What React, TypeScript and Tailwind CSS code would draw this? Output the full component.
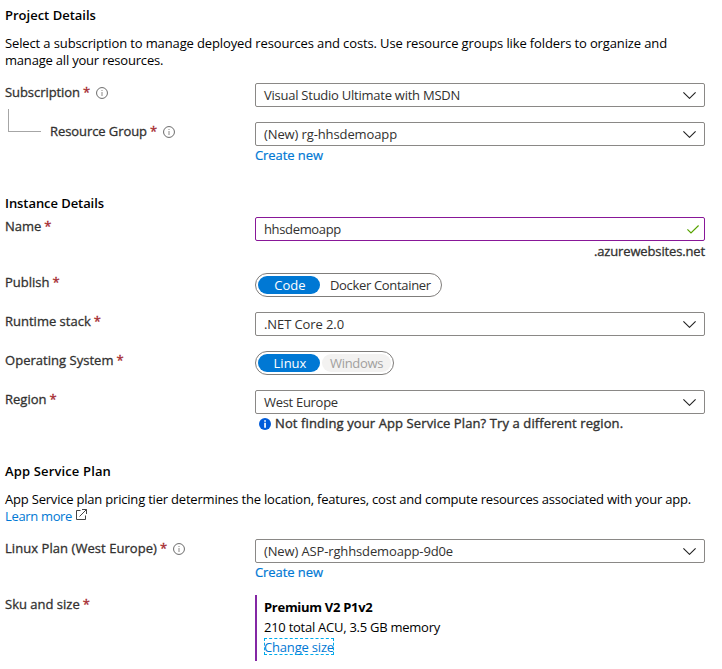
import type { ReactNode } from 'react';

function InfoIcon() {
  return (
    <svg className="ml-1.5 mt-[4px] h-3 w-3 shrink-0" viewBox="0 0 12 12" fill="none">
      <circle cx="6" cy="6" r="5.45" stroke="#6b6b6b" strokeWidth="1" />
      <path d="M6 5v4M6 3v1" stroke="#8a8886" strokeWidth="1" />
    </svg>
  );
}

function Label({ text, className = '', info = false }: { text: string; className?: string; info?: boolean }) {
  return (
    <div className="flex h-[18px] items-start whitespace-nowrap text-[#323130] [-webkit-text-stroke:0.3px]">
      <span className={className}>{text}</span>
      <span className="ml-[3px] text-[#a4262c]">*</span>
      {info && <InfoIcon />}
    </div>
  );
}

function Row({ label, height, children }: { label: ReactNode; height: string; children: ReactNode }) {
  return (
    <div className={`flex ${height}`}>
      <div className="w-[250px] shrink-0">{label}</div>
      <div className="w-[450px] shrink-0">{children}</div>
    </div>
  );
}

function Select({ text, className = '' }: { text: string; className?: string }) {
  return (
    <div className="flex h-6 items-center justify-between rounded-[2px] border border-[#8a8886] pl-2 pr-[8px] text-[#323130]">
      <span className={`whitespace-nowrap ${className}`}>{text}</span>
      <svg className="h-[7px] w-[13px]" viewBox="0 0 13 7" fill="none">
        <path d="M0.4 0.4L6.5 6.3L12.6 0.4" stroke="#222" strokeWidth="1.15" />
      </svg>
    </div>
  );
}

function Toggle({ on, off, offClass, disabled = false }: { on: string; off: string; offClass: string; disabled?: boolean }) {
  return (
    <div className="inline-flex h-6 gap-[2px] rounded-full border border-[#7f7d7b] p-[2px] align-top">
      <span className="w-[62px] rounded-full bg-[#0078d4] pl-0.5 text-center leading-[18px] text-white">
        {on}
      </span>
      <span className={`whitespace-nowrap rounded-full pl-2 leading-[18px] ${disabled ? 'bg-[#f3f2f1] text-[#a19f9d]' : 'text-[#323130]'} ${offClass}`}>
        {off}
      </span>
    </div>
  );
}

export default function App() {
  return (
    <div className="h-[669px] w-[722px] overflow-hidden bg-white pl-[5px] pt-1.5 font-['Open_Sans','Noto_Sans',sans-serif] text-[13px] leading-[18px] text-black">
      <h2 className="h-[29px] font-semibold">Project Details</h2>
      <p className="h-12 whitespace-nowrap leading-[17px]">
        <span className="tracking-[-0.126px]">Select a subscription to manage deployed resources and costs. Use resource groups like folders to organize and</span>
        <br />
        <span className="tracking-[-0.2px]">manage all your resources.</span>
      </p>
      <Row height="h-[39px]" label={
        <div>
          <Label text="Subscription" className="tracking-[-0.06px]" info />
          <div className="ml-[3px] mt-2 h-[23px] w-[33px] border-b border-l border-[#a6a6a6]" />
        </div>
      }>
        <Select text="Visual Studio Ultimate with MSDN" className="tracking-[-0.246px]" />
      </Row>
      <Row height="h-[72px]" label={<div className="pl-[45px]"><Label text="Resource Group" className="tracking-[-0.075px]" info /></div>}>
        <Select text="(New) rg-hhsdemoapp" className="tracking-[-0.113px]" />
        <a className="block tracking-[-0.069px] text-[#0078d4] [-webkit-text-stroke:0.2px]">Create new</a>
      </Row>
      <h2 className="h-[23px] font-semibold tracking-[-0.069px]">Instance Details</h2>
      <Row height="h-14" label={<Label text="Name" />}>
        <div className="flex h-6 items-center justify-between rounded-[2px] border border-[#881798] pl-2 pr-[5px] text-[#323130]">
          <span className="tracking-[-0.35px]">hhsdemoapp</span>
          <svg className="h-[9px] w-3" viewBox="0 0 12 9" fill="none">
            <path d="M0.4 4.3L4 8L11.6 0.5" stroke="#57a300" strokeWidth="1.2" />
          </svg>
        </div>
        <div className="mt-px text-right tracking-[-0.14px] text-[#323130] [-webkit-text-stroke:0.3px]">.azurewebsites.net</div>
      </Row>
      <Row height="h-[39px]" label={<Label text="Publish" />}>
        <Toggle on="Code" off="Docker Container" offClass="w-[117px] tracking-[-0.33px]" />
      </Row>
      <Row height="h-[39px]" label={<Label text="Runtime stack" />}>
        <Select text=".NET Core 2.0" className="tracking-[-0.096px]" />
      </Row>
      <Row height="h-[39px]" label={<Label text="Operating System" className="tracking-[0.03px]" />}>
        <Toggle on="Linux" off="Windows" offClass="w-[69px] tracking-[-0.3px]" disabled />
      </Row>
      <Row height="h-[72px]" label={<Label text="Region" />}>
        <Select text="West Europe" className="tracking-[-0.3px]" />
        <div className="flex items-start pl-1 text-[#323130]">
          <svg className="mr-1 mt-1 h-3 w-3 shrink-0" viewBox="0 0 12 12">
            <circle cx="6" cy="6" r="6" fill="#015cda" />
            <path d="M5.2 2.2h1.7v1.6H5.2zM5.2 4.7h1.7v5H5.2z" fill="white" />
          </svg>
          <span className="whitespace-nowrap tracking-[0.105px] [-webkit-text-stroke:0.35px]">Not finding your App Service Plan? Try a different region.</span>
        </div>
      </Row>
      <h2 className="h-[29px] font-semibold tracking-[0.143px]">App Service Plan</h2>
      <div className="h-12 whitespace-nowrap leading-[17px]">
        <p className="tracking-[-0.201px]">App Service plan pricing tier determines the location, features, cost and compute resources associated with your app.</p>
        <a className="flex items-start tracking-[-0.34px] text-[#0078d4]">
          Learn more
          <svg className="ml-1 mt-px h-[11px] w-[11px]" viewBox="0 0 11 11" fill="none" stroke="#444" strokeWidth="1">
            <path d="M4.5 1.5H0.5v9h9V6.5M6 0.5h4.5V5M10.5 0.5L3.5 7.5" />
          </svg>
        </a>
      </div>
      <Row height="h-14" label={<Label text="Linux Plan (West Europe)" className="tracking-[0.057px]" info />}>
        <Select text="(New) ASP-rghhsdemoapp-9d0e" className="tracking-[-0.134px]" />
        <a className="block tracking-[-0.069px] text-[#0078d4] [-webkit-text-stroke:0.2px]">Create new</a>
      </Row>
      <Row height="h-[66px]" label={<Label text="Sku and size" />}>
        <div className="flex h-[66px] flex-col items-start border-l-2 border-[#8427a5] pl-[7px] pt-0.5 leading-5">
          <span className="whitespace-nowrap font-bold tracking-[-0.29px]">Premium V2 P1v2</span>
          <span className="whitespace-nowrap tracking-[-0.257px]">210 total ACU, 3.5 GB memory</span>
          <a className="mt-px h-[17px] whitespace-nowrap leading-[18px] tracking-[-0.179px] text-[#0078d4] outline-1 -outline-offset-1 outline-dashed outline-[#00abec]">Change size</a>
        </div>
      </Row>
    </div>
  );
}
